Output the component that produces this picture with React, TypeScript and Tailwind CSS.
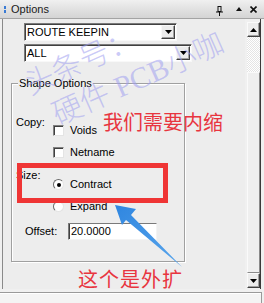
import React from "react";

function Tri({ up = false }: { up?: boolean }) {
  return (
    <svg width="7" height="4" viewBox="0 0 7 4" className="block">
      {up ? <polygon points="0,4 7,4 3.5,0" fill="#000" /> : <polygon points="0,0 7,0 3.5,4" fill="#000" />}
    </svg>
  );
}

function DropBtn() {
  return (
    <div className="w-[14px] h-full flex items-center justify-center bg-[#ececec] border border-t-[#f8f8f8] border-l-[#f8f8f8] border-r-[#404040] border-b-[#404040] shadow-[inset_-1px_-1px_0_#a0a0a0]">
      <Tri />
    </div>
  );
}

function Check({ label }: { label: string }) {
  return (
    <div className="flex items-center gap-[6px] h-[13px]">
      <div className="w-[11px] h-[11px] bg-white border border-t-[#808080] border-l-[#808080] border-r-[#e4e4e4] border-b-[#e4e4e4] shadow-[inset_1px_1px_0_#404040]" />
      <span className="leading-[13px]">{label}</span>
    </div>
  );
}

function Radio({ label, on = false }: { label: string; on?: boolean }) {
  return (
    <div className="flex items-center gap-[6px] h-[13px]">
      <div className="w-[11px] h-[11px] rounded-full bg-white border border-t-[#6a6a6a] border-l-[#6a6a6a] border-r-[#e4e4e4] border-b-[#e4e4e4] flex items-center justify-center">
        {on && <div className="w-[4px] h-[4px] rounded-full bg-black" />}
      </div>
      <span className="leading-[13px]">{label}</span>
    </div>
  );
}

export default function App() {
  return (
    <div className="relative w-[264px] h-[303px] overflow-hidden bg-[#f0f0f0] text-[11px] text-black font-['Liberation_Sans',Arial,sans-serif] leading-none">
      {/* title bar */}
      <div className="h-[19px] flex items-center bg-linear-to-b from-[#f0f0f0] to-[#d4d4d4] border-b border-[#a4a4a4]">
        <div className="ml-[4px] flex flex-col gap-[1px]">
          <div className="w-[2px] h-[3px] bg-[#3a7bd5]" />
          <div className="w-[2px] h-[3px] bg-[#3a7bd5]" />
        </div>
        <span className="ml-[5px] text-[#1a1a1a]">Options</span>
        <div className="ml-auto mr-[7px] flex items-center">
          <svg width="8" height="10" viewBox="0 0 8 10" className="block mt-[3px]">
            <rect x="2" y="0.5" width="3" height="5" fill="none" stroke="#111" strokeWidth="1" />
            <line x1="0" y1="6" x2="7" y2="6" stroke="#111" strokeWidth="1" />
            <line x1="3.5" y1="6" x2="3.5" y2="10" stroke="#111" strokeWidth="1" />
          </svg>
          <svg width="6" height="4" viewBox="0 0 6 4" className="block ml-[12px]">
            <polygon points="0,4 6,4 3,0" fill="#111" />
          </svg>
          <svg width="7" height="7" viewBox="0 0 7 7" className="block ml-[8px]">
            <path d="M0.5 0.5 L6.5 6.5 M6.5 0.5 L0.5 6.5" stroke="#111" strokeWidth="1.6" />
          </svg>
        </div>
      </div>

      {/* main panel */}
      <div className="flex h-[270px] pl-[2px] pr-[3px]">
        <div className="flex-1 border-l border-[#8a8a8a] bg-[#ededed] pt-[4px]">
          <div className="ml-[21px] w-[153px] h-[18px] flex bg-white border border-t-[#7a7a7a] border-l-[#7a7a7a] border-r-[#f8f8f8] border-b-[#f8f8f8] shadow-[inset_1px_1px_0_#404040] pr-[1px] py-[1px]">
            <div className="flex-1 flex items-center pl-[2px] pt-[1px]">ROUTE KEEPIN</div>
            <DropBtn />
          </div>
          <div className="ml-[21px] mt-[3px] w-[168px] h-[18px] flex bg-white border border-t-[#7a7a7a] border-l-[#7a7a7a] border-r-[#f8f8f8] border-b-[#f8f8f8] shadow-[inset_1px_1px_0_#404040] pr-[1px] py-[1px]">
            <div className="flex-1 flex items-center pl-[2px] pt-[1px]">ALL</div>
            <DropBtn />
          </div>

          {/* group box */}
          <div className="relative ml-[8px] mt-[21px] w-[174px] h-[179px] border border-[#a0a0a0] shadow-[1px_1px_0_#ffffff,inset_1px_1px_0_#ffffff]">
            <span className="absolute -top-[7px] left-[6px] px-[1px] bg-[#ededed] leading-[13px]">Shape Options</span>
            <div className="pt-[32px] pl-[4px]">
              <div className="flex">
                <div className="w-[37px] h-[13px] leading-[13px]">Copy:</div>
                <div className="pt-[8px] flex flex-col gap-[9px]">
                  <Check label="Voids" />
                  <Check label="Netname" />
                </div>
              </div>
              <div className="flex mt-[10px]">
                <div className="w-[37px] h-[13px] leading-[13px]">Size:</div>
                <div className="pt-[9px] flex flex-col gap-[9px]">
                  <Radio label="Contract" on />
                  <Radio label="Expand" />
                </div>
              </div>
              <div className="flex items-center mt-[10px] ml-[9px] h-[17px]">
                <div className="w-[43px]">Offset:</div>
                <div className="w-[89px] h-[17px] flex items-center pl-[2px] bg-white border border-t-[#7a7a7a] border-l-[#7a7a7a] border-r-[#f4f4f4] border-b-[#f4f4f4] shadow-[inset_1px_0_0_#404040]">
                  20.0000
                </div>
              </div>
            </div>
          </div>
        </div>

        {/* scrollbar */}
        <div className="w-[16px] border-r border-[#3a3a3a] pl-[2px] pt-[3px] flex flex-col">
          <div className="h-[15px] flex items-center justify-center bg-[#ececec] border border-t-[#fafafa] border-l-[#fafafa] border-r-[#404040] border-b-[#404040] shadow-[inset_-1px_-1px_0_#a0a0a0]">
            <Tri up />
          </div>
          <div className="h-[35px] bg-[repeating-conic-gradient(#ffffff_0_25%,#e4e4e4_0_50%)] bg-[length:2px_2px]" />
          <div className="flex-1 bg-[#efefef] border border-t-[#fafafa] border-l-[#fafafa] border-r-[#8a8a8a] border-b-[#8a8a8a]" />
          <div className="h-[15px] mb-[1px] flex items-center justify-center bg-[#ececec] border border-t-[#fafafa] border-l-[#fafafa] border-r-[#404040] border-b-[#404040] shadow-[inset_-1px_-1px_0_#a0a0a0]">
            <Tri />
          </div>
        </div>
      </div>

      {/* bottom strip */}
      <div className="h-[3px]" />
      <div className="h-[11px] mr-[2px] border-t border-r border-[#9a9a9a] bg-[#f4f4f4] shadow-[inset_0_1px_0_#ffffff]" />

      {/* watermark */}
      <span className="absolute left-[32px] top-[70px] origin-bottom-left -rotate-[24deg] whitespace-nowrap text-[30px] leading-[30px] font-light text-[#9e9ef0]/55 font-['Liberation_Serif','Noto_Sans_CJK_SC',serif] pointer-events-none">
        头条号：
      </span>
      <span className="absolute left-[60px] top-[100px] origin-bottom-left -rotate-[24deg] whitespace-nowrap text-[30px] leading-[30px] font-light text-[#9e9ef0]/55 font-['Liberation_Serif','Noto_Sans_CJK_SC',serif] pointer-events-none">
        硬件 PCB小咖
      </span>

      {/* red box */}
      <div className="absolute left-[17px] top-[163px] w-[151px] h-[40px] border-[5px] border-[#ef3535]" />

      {/* red annotations */}
      <span className="absolute left-[103px] top-[110px] whitespace-nowrap text-[20px] leading-[24px] text-[#e8353f] font-['Noto_Sans_CJK_SC',sans-serif]">
        我们需要内缩
      </span>
      <span className="absolute left-[78px] top-[267px] whitespace-nowrap text-[20px] leading-[24px] tracking-[1px] text-[#e8353f] font-['Noto_Sans_CJK_SC',sans-serif]">
        这个是外扩
      </span>

      {/* blue arrow */}
      <svg className="absolute left-0 top-0 pointer-events-none" width="264" height="303" viewBox="0 0 264 303">
        <defs>
          <linearGradient id="ab" x1="0" y1="0" x2="1" y2="1">
            <stop offset="0" stopColor="#2f86e0" />
            <stop offset="1" stopColor="#5aa6ec" />
          </linearGradient>
        </defs>
        <polygon points="115,205 136,209 131,215 182,267 126,220 122,225" fill="url(#ab)" />
      </svg>
    </div>
  );
}
